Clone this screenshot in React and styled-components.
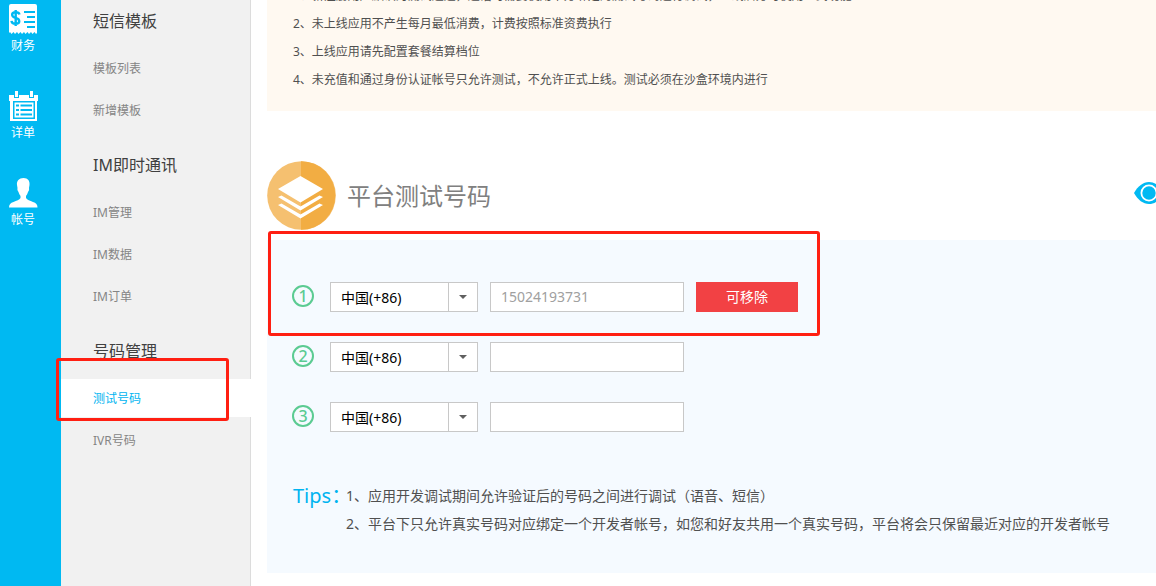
import React, { useState } from "react";
import styled, { createGlobalStyle } from "styled-components";

const GlobalStyle = createGlobalStyle`
  * {
    box-sizing: border-box;
  }
  body {
    margin: 0;
    background: #fff;
    color: #505050;
    font-family: "Noto Sans", "Noto Sans CJK SC", sans-serif;
    font-size: 12px;
  }
  a {
    color: inherit;
    text-decoration: none;
  }
  ul, ol {
    list-style: none;
    margin: 0;
    padding: 0;
  }
`;

const Page = styled.div`
  display: flex;
  min-height: 100vh;
  overflow: hidden;
`;

const Rail = styled.nav`
  flex: none;
  width: 61px;
  padding: 4px 15px 0 0;
  background: #00b9f2;
`;

const RailLink = styled.a`
  display: flex;
  flex-direction: column;
  align-items: center;
  gap: 2px;
  height: 87px;
  color: #fff;
  line-height: 18px;

  svg {
    display: block;
  }
`;

const Menu = styled.nav`
  flex: none;
  width: 190px;
  padding-top: 1px;
  background: #f1f1f1;
  box-shadow: inset -1px 0 #dcdcdc;
`;

const MenuGroup = styled.section`
  margin-bottom: 16px;
`;

const MenuTitle = styled.h2`
  margin: 0 0 8px;
  padding-left: 32px;
  color: #404040;
  font-size: 16px;
  font-weight: 400;
  line-height: 40px;
`;

const MenuList = styled.ul`
  display: grid;
  gap: 4px;
`;

const MenuItem = styled.li`
  position: relative;
  background: ${(props) => (props.$active ? "#fff" : "none")};
  color: ${(props) => (props.$active ? "#00b4f0" : "#858585")};
  line-height: 36px;

  a {
    display: block;
    padding: 2px 0 0 32px;
  }
`;

const Mark = styled.span`
  position: absolute;
  inset: ${(props) => props.$inset};
  width: ${(props) => props.$width || "auto"};
  border: 3px solid #ff1f12;
  border-radius: 3px;
  pointer-events: none;
`;

const Content = styled.main`
  flex: 1;
  min-width: 0;
  margin-top: -18px;
  padding-left: 16px;
`;

const Notice = styled.ol`
  padding: 0 26px 17px;
  background: #fff9f1;
  line-height: 28px;
`;

const Header = styled.header`
  display: flex;
  align-items: center;
  margin-top: 50px;
  padding-bottom: 10px;

  svg {
    flex: none;
  }
`;

const Title = styled.h1`
  margin: 0 0 0 11px;
  color: #808080;
  font-size: 24px;
  font-weight: 400;
  line-height: 36px;
`;

const WatchLink = styled.a`
  margin: 0 -8px 0 auto;
  padding-bottom: 6px;

  svg {
    display: block;
  }
`;

const Panel = styled.section`
  padding: 42px 25px 35px;
  background: #f5faff;
`;

const NumberRow = styled.div`
  position: relative;
  display: flex;
  gap: 12px;
  margin-bottom: 30px;
`;

const Index = styled.span`
  flex: none;
  width: 22px;
  height: 22px;
  margin: 3px 4px 0 0;
  border: 2px solid #5bcb92;
  border-radius: 50%;
  color: #5bcb92;
  font-size: 16px;
  font-weight: 500;
  line-height: 18px;
  text-align: center;
`;

const Country = styled.div`
  display: grid;
  grid-template-columns: 117px 29px;
  border: 1px solid #c8c8c8;
  background: #fff;

  select {
    grid-area: 1 / 1 / 2 / 3;
    height: 28px;
    padding: 1px 10px 0;
    border: 0;
    appearance: none;
    background: none;
    color: #000;
    font: 14px "Noto Sans", "Noto Sans CJK SC", sans-serif;
  }
`;

const Arrow = styled.span`
  display: grid;
  grid-area: 1 / 2 / 2 / 3;
  place-items: center;
  border-left: 1px solid #c8c8c8;
  pointer-events: none;
`;

const PhoneInput = styled.input`
  width: 194px;
  height: 30px;
  padding: 0 10px 2px;
  border: 1px solid #c8c8c8;
  border-radius: 0;
  background: #fff;
  color: #a0a0a0;
  font: 14px "Noto Sans", "Noto Sans CJK SC", sans-serif;
`;

const RemoveButton = styled.button`
  width: 102px;
  height: 30px;
  padding: 0 0 2px;
  border: 0;
  background: #f24144;
  color: #fff;
  font: 14px "Noto Sans", "Noto Sans CJK SC", sans-serif;
`;

const Tips = styled.div`
  display: flex;
  margin-top: 50px;
  padding-left: 1px;
  font-size: 14px;
  line-height: 28px;
`;

const TipsLabel = styled.strong`
  flex: none;
  width: 53px;
  color: #00b4f0;
  font-size: 20px;
  font-weight: 400;
  white-space: nowrap;
`;

const BillIcon = () => (
  <svg width="30" height="31" viewBox="0 0 30 31" aria-hidden="true">
    <path
      fill="#fff"
      d="M3 0h24a2 2 0 0 1 2 2v27l-1 1-1.500-2-2 2-1.500-2-2 2-1.500-2-2 2-1.500-2-2 2-1.500-2-2 2-1.500-2-2 2-1.500-2-2 2-1.500-2L1 29V2a2 2 0 0 1 2-2z"
    />
    <path
      fill="none"
      stroke="#00b9f2"
      strokeWidth="2"
      d="M16 8h11M19 13h8M16 18h11M19 23h8"
    />
    <path
      fill="none"
      stroke="#00b9f2"
      strokeWidth="2.400"
      d="M11.500 10.500C11 8.700 9.500 8.200 7.700 8.200c-4.700 0-4.700 4.600-.2 5.600 5 1 5 6 0 6-2.300 0-3.800-1-4-3M7.700 6v16"
    />
  </svg>
);

const ListIcon = () => (
  <svg width="30" height="31" viewBox="0 0 30 31" aria-hidden="true">
    <path fill="#fff" d="M1 4h29v6h-1v20H2V10H1z" />
    <path fill="#00b9f2" d="M6 4h5v3H6zM21 4h5v3h-5z" />
    <path fill="#fff" d="M7 0h3v6H7zM22 0h3v6h-3z" />
    <path fill="none" stroke="#00b9f2" strokeWidth="1.500" d="M5.750 10.750h20.500v16.500H5.750z" />
    <path
      stroke="#00b9f2"
      strokeWidth="1.800"
      d="M8 14.500h3M12.500 14.500H24M8 19h3M12.500 19H24M8 23.500h3M12.500 23.500H24"
    />
  </svg>
);

const UserIcon = () => (
  <svg width="30" height="31" viewBox="0 0 30 31" aria-hidden="true">
    <path
      fill="#fff"
      d="M15.500 0c4.500 0 6.500 3 6 7l-.5 3c.5 2-.5 3-1 4-.5 2-1.500 3-2 4v2c1 2 4 2.500 7 4 3 1 4.500 2.500 4.500 5.500H1c0-3 1.500-4.500 4.500-5.500 3-1.500 6-2 7-4v-2c-.5-1-1.500-2-2-4-.5-1-1.500-2-1-4L9 7c-.5-4 2-7 6.500-7z"
    />
  </svg>
);

const LayersIcon = () => (
  <svg width="69" height="69" viewBox="0 0 69 69" aria-hidden="true">
    <circle cx="34.500" cy="34.500" r="34.300" fill="#f5c070" />
    <path fill="#f2ad43" d="M34 .2a34.300 34.300 0 0 1 0 68.600z" />
    <path
      fill="#fff"
      d="M33.500 15L56 28 33.500 41.500 11 28zM11 36l3.500-1.500L33.500 45.500 52.500 34.500 56 36 33.500 49.500zM11 44l3.500-1.500L33.500 53.500 52.500 42.500 56 44 33.500 57.500z"
    />
  </svg>
);

const EyeIcon = () => (
  <svg width="30" height="22" viewBox="0 0 30 22" aria-hidden="true">
    <path fill="#00b9f2" d="M0 11C4 4 9 0 15 0s11 4 15 11c-4 7-9 11-15 11S4 18 0 11z" />
    <circle cx="15" cy="11" r="7.600" fill="none" stroke="#fff" strokeWidth="1.800" />
  </svg>
);

const railLinks = [
  { label: "财务", Icon: BillIcon },
  { label: "详单", Icon: ListIcon },
  { label: "帐号", Icon: UserIcon },
];

const menu = [
  { title: "短信模板", items: ["模板列表", "新增模板"] },
  { title: "IM即时通讯", items: ["IM管理", "IM数据", "IM订单"] },
  { title: "号码管理", items: ["测试号码", "IVR号码"] },
];

const notices = [
  "1、新注册用户默认为测试通道，通话时需要使用下方绑定的测试号码进行调试，上线后方可使用正式功能",
  "2、未上线应用不产生每月最低消费，计费按照标准资费执行",
  "3、上线应用请先配置套餐结算档位",
  "4、未充值和通过身份认证帐号只允许测试，不允许正式上线。测试必须在沙盒环境内进行",
];

const App = () => {
  const [active, setActive] = useState("测试号码");
  const [numbers, setNumbers] = useState(["15024193731", "", ""]);

  const handleChange = (index, value) => {
    setNumbers(numbers.map((n, i) => (i === index ? value : n)));
  };

  return (
    <Page lang="zh-CN">
      <GlobalStyle />
      <Rail>
        {railLinks.map(({ label, Icon }) => (
          <RailLink href="#" key={label}>
            <Icon />
            {label}
          </RailLink>
        ))}
      </Rail>
      <Menu>
        {menu.map((group) => (
          <MenuGroup key={group.title}>
            <MenuTitle>{group.title}</MenuTitle>
            <MenuList>
              {group.items.map((item) => (
                <MenuItem key={item} $active={item === active}>
                  <a href="#" onClick={() => setActive(item)}>
                    {item}
                  </a>
                  {item === "测试号码" && <Mark $inset="-21px 22px -4px -5px" />}
                </MenuItem>
              ))}
            </MenuList>
          </MenuGroup>
        ))}
      </Menu>
      <Content>
        <Notice>
          {notices.map((text) => (
            <li key={text}>{text}</li>
          ))}
        </Notice>
        <Header>
          <LayersIcon />
          <Title>平台测试号码</Title>
          <WatchLink href="#" aria-label="查看">
            <EyeIcon />
          </WatchLink>
        </Header>
        <Panel>
          {numbers.map((number, index) => (
            <NumberRow key={index}>
              <Index>{index + 1}</Index>
              <Country>
                <select aria-label="国家">
                  <option>中国(+86)</option>
                </select>
                <Arrow>
                  <svg width="8" height="4" viewBox="0 0 8 4" aria-hidden="true">
                    <path fill="#606060" d="M0 0h8L4 4z" />
                  </svg>
                </Arrow>
              </Country>
              <PhoneInput
                aria-label="测试号码"
                value={number}
                onChange={(e) => handleChange(index, e.target.value)}
              />
              {index === 0 && (
                <RemoveButton type="button" onClick={() => handleChange(0, "")}>
                  可移除
                </RemoveButton>
              )}
              {index === 0 && <Mark $inset="-51px auto -24px -24px" $width="552px" />}
            </NumberRow>
          ))}
          <Tips>
            <TipsLabel>Tips：</TipsLabel>
            <ol>
              <li>1、应用开发调试期间允许验证后的号码之间进行调试（语音、短信）</li>
              <li>
                2、平台下只允许真实号码对应绑定一个开发者帐号，如您和好友共用一个真实号码，平台将会只保留最近对应的开发者帐号
              </li>
            </ol>
          </Tips>
        </Panel>
      </Content>
    </Page>
  );
};

export default App;
